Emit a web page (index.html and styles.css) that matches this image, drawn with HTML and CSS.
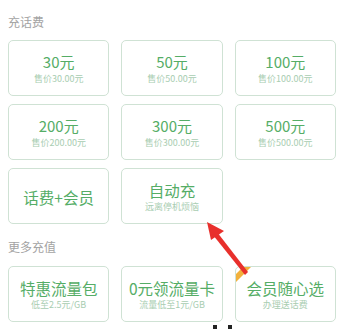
FILE: index.html
```html
<!DOCTYPE html>
<html lang="zh">
<head>
<meta charset="utf-8">
<link rel="stylesheet" href="styles.css">
</head>
<body>
<div class="page">
  <div class="section-title first">充话费</div>
  <div class="grid">
    <div class="card"><div class="title">30元</div><div class="sub">售价30.00元</div></div>
    <div class="card"><div class="title">50元</div><div class="sub">售价50.00元</div></div>
    <div class="card"><div class="title">100元</div><div class="sub">售价100.00元</div></div>
    <div class="card"><div class="title">200元</div><div class="sub">售价200.00元</div></div>
    <div class="card"><div class="title">300元</div><div class="sub">售价300.00元</div></div>
    <div class="card"><div class="title">500元</div><div class="sub">售价500.00元</div></div>
    <div class="card"><div class="title big">话费+会员</div></div>
    <div class="card"><div class="title big">自动充</div><div class="sub">远离停机烦恼</div></div>
  </div>
  <div class="section-title second">更多充值</div>
  <div class="grid">
    <div class="card"><div class="title big">特惠流量包</div><div class="sub">低至2.5元/GB</div></div>
    <div class="card"><div class="title big">0元领流量卡</div><div class="sub">流量低至1元/GB</div></div>
    <div class="card badge-card">
      <svg class="ribbon" width="20" height="20" viewBox="0 0 20 20"><polygon points="0,9 9,0 17,0 0,17" fill="#f2b13c"/></svg>
      <div class="title big">会员随心选</div><div class="sub">办理送话费</div>
    </div>
  </div>
  <div class="below"><span class="mark"></span><span class="mark"></span></div>
</div>
<svg class="arrow" width="348" height="329" viewBox="0 0 348 329">
  <polygon points="245,275 248,272 217,232 213,235" fill="#e8302c"/>
  <polygon points="207,222 224,231 211,240" fill="#e8302c"/>
</svg>
</body>
</html>
```
FILE: styles.css
```css
html, body {
  margin: 0;
  padding: 0;
  background: #fff;
  overflow: hidden;
}
body {
  width: 348px;
  height: 329px;
  position: relative;
  font-family: "Noto Sans CJK SC", "Noto Sans", sans-serif;
}
.page {
  padding: 0 12px 0 8px;
}
.section-title {
  font-size: 12px;
  line-height: 14px;
  color: #a3a3a3;
}
.section-title.first {
  padding-top: 15px;
  margin-bottom: 11px;
}
.section-title.second {
  margin-top: 16px;
  margin-bottom: 12px;
}
.grid {
  display: grid;
  grid-template-columns: repeat(3, 1fr);
  grid-auto-rows: 56px;
  column-gap: 12px;
  row-gap: 8px;
}
.card {
  position: relative;
  border: 1px solid #cfe2d4;
  border-radius: 5px;
  display: flex;
  flex-direction: column;
  align-items: center;
  justify-content: center;
  gap: 3px;
  padding-top: 1px;
  overflow: hidden;
  box-sizing: border-box;
}
.title {
  font-size: 15px;
  line-height: 16px;
  color: #55ad66;
}
.title.big {
  font-size: 15.5px;
}
.sub {
  font-size: 9px;
  line-height: 11px;
  color: #a8cdb1;
  white-space: nowrap;
}
.ribbon {
  position: absolute;
  left: -1px;
  top: -1px;
}
.below {
  display: flex;
  gap: 11px;
  margin-top: 3px;
  padding-left: 205px;
}
.mark {
  width: 4px;
  height: 6px;
  background: #222;
}
.arrow {
  position: absolute;
  left: 0;
  top: 0;
  pointer-events: none;
}
```
